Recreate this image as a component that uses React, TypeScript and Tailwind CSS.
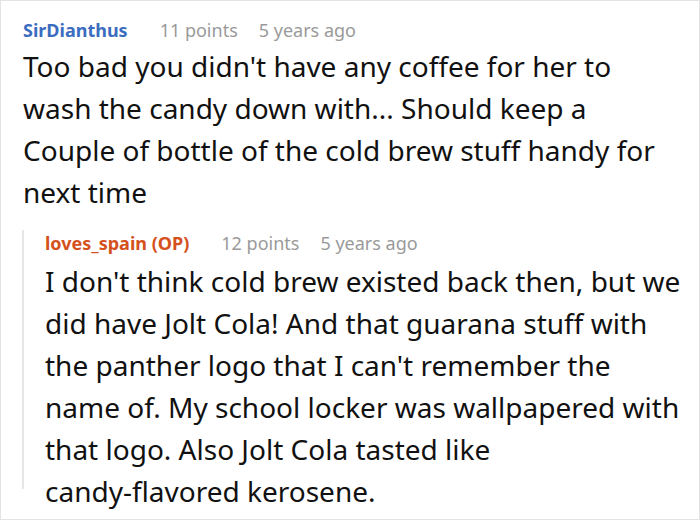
import React from "react";

export default function App() {
  return (
    <div
      className="w-[700px] h-[520px] border border-[#e3e3e3] bg-white overflow-hidden"
      style={{ fontFamily: '"Noto Sans", "Open Sans", sans-serif' }}
    >
      <div className="pl-[22px] pt-[16px]">
        <div className="flex items-center h-[26px] text-[18px]">
          <span className="font-bold text-[#3b6cbf]">SirDianthus</span>
          <span className="ml-[32px] text-[#9a9a9a]">11 points</span>
          <span className="ml-[21px] text-[#9a9a9a]">5 years ago</span>
        </div>
        <p className="mt-[2px] text-[28px] leading-[42px] text-[#111] whitespace-nowrap">
          Too bad you didn't have any coffee for her to
          <br />
          wash the candy down with... Should keep a
          <br />
          Couple of bottle of the cold brew stuff handy for
          <br />
          next time
        </p>
        <div className="mt-[20px] -ml-[1px] h-[259px] border-l-2 border-[#e6e6e6] pl-[21px]">
          <div className="flex items-center h-[26px] text-[18px] -mt-[3px]">
            <span className="font-bold text-[#d4511d]">loves_spain (OP)</span>
            <span className="ml-[32px] text-[#9a9a9a]">12 points</span>
            <span className="ml-[21px] text-[#9a9a9a]">5 years ago</span>
          </div>
          <p className="mt-[4px] text-[28px] leading-[42px] text-[#111] whitespace-nowrap">
            I don't think cold brew existed back then, but we
            <br />
            did have Jolt Cola! And that guarana stuff with
            <br />
            the panther logo that I can't remember the
            <br />
            name of. My school locker was wallpapered with
            <br />
            that logo. Also Jolt Cola tasted like
            <br />
            candy-flavored kerosene.
          </p>
        </div>
      </div>
    </div>
  );
}
